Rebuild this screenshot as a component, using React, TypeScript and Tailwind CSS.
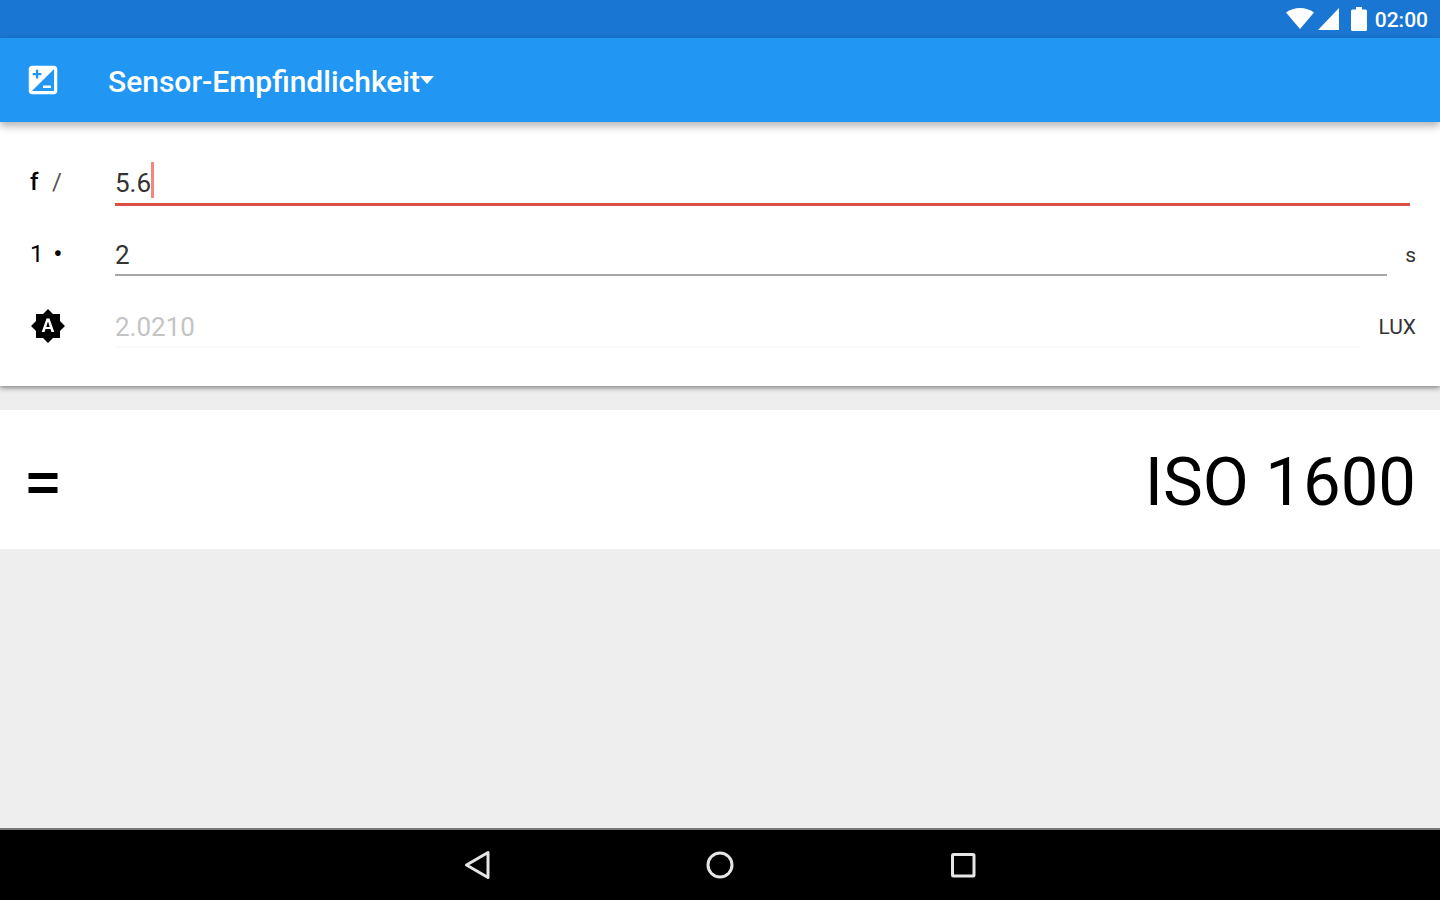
import { MdBrightnessAuto } from "react-icons/md";

const MODES = ["Sensor-Empfindlichkeit"];

function StatusBar() {
  return (
    <div className="flex h-[38px] shrink-0 items-center justify-end bg-[#1976d2] pr-3 text-white">
      <svg viewBox="0 0 28 22" className="mr-1 h-[22px] w-7" fill="currentColor" aria-hidden="true">
        <path d="M0 4.5C8-1.5 20-1.5 28 4.5L14 21z" />
      </svg>
      <svg viewBox="0 0 21 22" className="mr-3 h-[22px] w-[21px]" fill="currentColor" aria-hidden="true">
        <path d="M21 0v22H0z" />
      </svg>
      <svg viewBox="0 0 16 24" className="mr-2 h-6 w-4" fill="currentColor" aria-hidden="true">
        <path d="M5 0h6v2.5h3.5A1.5 1.5 0 0 1 16 4v18.5a1.5 1.5 0 0 1-1.5 1.5h-13A1.5 1.5 0 0 1 0 22.5V4a1.5 1.5 0 0 1 1.5-1.5H5z" />
      </svg>
      <span className="pt-0.5 text-[21px] font-medium leading-6">02:00</span>
    </div>
  );
}

function AppBar() {
  return (
    <header className="relative z-10 flex h-[84px] shrink-0 items-center bg-[#2196f3] pl-6 text-white shadow-[0_4px_8px_rgba(0,0,0,0.3)]">
      <div className="w-[84px]">
        <svg viewBox="0 0 24 24" className="h-[38px] w-[38px]" fill="currentColor" aria-hidden="true">
          <path d="M19 3H5c-1.1 0-2 .9-2 2v14c0 1.1.9 2 2 2h14c1.1 0 2-.9 2-2V5c0-1.1-.9-2-2-2zM5.5 7.5h2v-2H9v2h2V9H9v2H7.5V9h-2V7.5zM19 19H5L19 5v14zm-2-2v-1.5h-5V17h5z" />
        </svg>
      </div>
      <select
        aria-label="Modus"
        className="cursor-pointer appearance-none bg-transparent pt-1 text-[30px] font-medium leading-10 outline-none"
      >
        {MODES.map((m) => (
          <option key={m}>{m}</option>
        ))}
      </select>
      <svg viewBox="0 0 14 8" className="h-2 w-3.5" fill="currentColor" aria-hidden="true">
        <path d="M0 0h14L7 8z" />
      </svg>
    </header>
  );
}

export default function App() {
  return (
    <div className="flex min-h-screen w-full flex-col bg-[#eeeeee] font-['Roboto',sans-serif] text-black">
      <StatusBar />
      <AppBar />

      <main className="flex-1">
        <form className="flex flex-col bg-white py-6 shadow-[0_2px_5px_rgba(0,0,0,0.45)]">
          {/* Aperture, focused */}
          <div className="flex h-[72px] items-center px-[30px]">
            <label htmlFor="aperture" className="w-[85px] shrink-0 text-2xl">
              <span className="flex w-8 justify-between">
                <span className="font-medium">f</span>
                <span className="text-[#555555]">/</span>
              </span>
            </label>
            <div className="relative flex-1">
              <input
                id="aperture"
                defaultValue="5.6"
                className="block h-12 w-full border-b-3 border-[#db4f44] bg-transparent pt-1 text-[26px] text-[#333333] caret-transparent outline-none"
              />
              <span className="absolute left-9 top-1 h-9 w-[3px] bg-[#f0695c]/80" />
            </div>
          </div>

          {/* Exposure time */}
          <div className="flex h-[72px] items-center pl-[30px] pr-6">
            <label htmlFor="time" className="w-[85px] shrink-0 text-2xl">
              <span className="flex w-8 justify-between">
                <span>1</span>
                <span className="font-bold">•</span>
              </span>
            </label>
            <input
              id="time"
              defaultValue="2"
              className="h-11 min-w-0 flex-1 border-b-2 border-[#a6a6a6] bg-transparent pt-1 text-[26px] text-[#333333] outline-none"
            />
            <span className="pl-[18px] pt-1 text-[21px] text-[#333333]">s</span>
          </div>

          {/* Illuminance, read from the light sensor */}
          <div className="flex h-[72px] items-center pl-[30px] pr-6">
            <label htmlFor="lux" aria-label="Lux" className="w-[85px] shrink-0">
              <MdBrightnessAuto className="h-9 w-9" />
            </label>
            <input
              id="lux"
              defaultValue="2.0210"
              disabled
              className="h-11 min-w-0 flex-1 border-b-2 border-[#fafafa] bg-transparent pt-1 text-[26px] text-[#c4c4c4] outline-none"
            />
            <span className="pl-[18px] pt-1 text-[21px] text-[#333333]">LUX</span>
          </div>
        </form>

        <section className="mt-6 flex h-[139px] items-center justify-between bg-white pl-7 pr-6 pt-1.5">
          <svg viewBox="0 0 30 22" className="h-[22px] w-[30px]" aria-hidden="true">
            <path d="M0.5 1h29v6h-29zM0.5 15h29v6h-29z" />
          </svg>
          <output className="text-[67px]">ISO 1600</output>
        </section>
      </main>

      <nav className="flex h-[72px] shrink-0 items-center justify-center border-t-2 border-[#777777] bg-black text-[#e6e6e6]">
        <button type="button" aria-label="Zurück" className="flex w-[243px] justify-center">
          <svg viewBox="0 0 32 32" className="h-8 w-8" fill="none" stroke="currentColor" strokeWidth="3" strokeLinejoin="round">
            <path d="M27 3.5v25L5.5 16z" />
          </svg>
        </button>
        <button type="button" aria-label="Startbildschirm" className="flex w-[243px] justify-center">
          <svg viewBox="0 0 32 32" className="h-8 w-8" fill="none" stroke="currentColor" strokeWidth="3">
            <circle cx="16" cy="16" r="12" />
          </svg>
        </button>
        <button type="button" aria-label="Übersicht" className="flex w-[243px] justify-center">
          <svg viewBox="0 0 32 32" className="h-8 w-8" fill="none" stroke="currentColor" strokeWidth="3">
            <rect x="5.5" y="5.5" width="21.5" height="21.5" rx="1" />
          </svg>
        </button>
      </nav>
    </div>
  );
}
